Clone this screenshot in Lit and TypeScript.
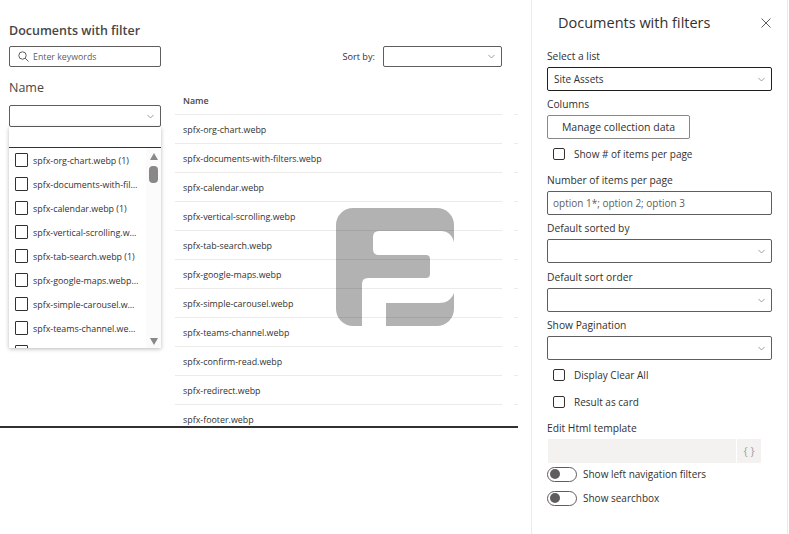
import { LitElement, html, css } from "lit";
import { customElement, property } from "lit/decorators.js";

const FILES = [
  "spfx-org-chart.webp",
  "spfx-documents-with-filters.webp",
  "spfx-calendar.webp",
  "spfx-vertical-scrolling.webp",
  "spfx-tab-search.webp",
  "spfx-google-maps.webp",
  "spfx-simple-carousel.webp",
  "spfx-teams-channel.webp",
  "spfx-confirm-read.webp",
  "spfx-redirect.webp",
  "spfx-footer.webp",
];

const chevron = html`<svg width="7" height="5" viewBox="0 0 7 5" fill="none" stroke="currentColor" stroke-width="0.8">
  <path d="M.3.8 3.5 4 6.7.8" />
</svg>`;

@customElement("fake-select")
export class FakeSelect extends LitElement {
  static styles = css`
    :host {
      display: block;
    }
    .box {
      box-sizing: border-box;
      display: flex;
      align-items: center;
      justify-content: space-between;
      height: 100%;
      padding: 0 6px;
      border: 1px solid #605e5c;
      border-radius: 2px;
      background: #fff;
      color: #323130;
      font-size: 10px;
    }
    .box.strong {
      border-color: #201f1e;
    }
    .chev {
      display: flex;
      color: #8a8886;
    }
  `;

  @property({ type: String }) value = "";
  @property({ type: Boolean }) strong = false;

  protected render() {
    return html`<div class="box ${this.strong ? "strong" : ""}">
      <span>${this.value}</span><span class="chev">${chevron}</span>
    </div>`;
  }
}

@customElement("fake-check")
export class FakeCheck extends LitElement {
  static styles = css`
    :host {
      display: flex;
      align-items: center;
      gap: 9px;
      margin-left: 6px;
      color: #323130;
      font-size: 10px;
    }
    i {
      display: block;
      box-sizing: border-box;
      width: 12px;
      height: 12px;
      border: 1px solid #323130;
      border-radius: 2px;
    }
  `;

  @property({ type: String }) label = "";

  protected render() {
    return html`<i></i><span>${this.label}</span>`;
  }
}

@customElement("fake-toggle")
export class FakeToggle extends LitElement {
  static styles = css`
    :host {
      display: flex;
      align-items: center;
      gap: 6px;
      color: #323130;
      font-size: 10px;
    }
    .track {
      box-sizing: border-box;
      display: flex;
      align-items: center;
      width: 30px;
      height: 15px;
      padding-left: 2px;
      border: 1px solid #605e5c;
      border-radius: 8px;
    }
    .dot {
      width: 10px;
      height: 10px;
      border-radius: 50%;
      background: #605e5c;
    }
  `;

  @property({ type: String }) label = "";

  protected render() {
    return html`<div class="track"><div class="dot"></div></div>
      <span>${this.label}</span>`;
  }
}

@customElement("app-root")
export class AppRoot extends LitElement {
  static styles = css`
    :host {
      display: flex;
      width: 789px;
      height: 534px;
      overflow: hidden;
      position: relative;
      background: #fff;
      color: #323130;
      font-family: "Open Sans", "Noto Sans", sans-serif;
      font-size: 10.25px;
      line-height: 14px;
    }
    .page {
      box-sizing: border-box;
      position: relative;
      flex: none;
      width: 518px;
      height: 428px;
      padding: 23px 16px 0 9px;
      border-bottom: 2px solid #323130;
      overflow: hidden;
    }
    .title {
      height: 16px;
      font-size: 12.5px;
      line-height: 16px;
      font-weight: 600;
      color: #484644;
    }
    .toolbar {
      display: flex;
      justify-content: space-between;
      margin-top: 7px;
      height: 21px;
    }
    .search {
      box-sizing: border-box;
      display: flex;
      align-items: center;
      gap: 4px;
      width: 152px;
      padding-left: 8px;
      border: 1px solid #605e5c;
      border-radius: 2px;
      font-size: 8.8px;
      color: #605e5c;
    }
    .search svg {
      color: #605e5c;
    }
    .sort {
      display: flex;
      align-items: center;
      gap: 8px;
      font-size: 9.2px;
    }
    .sort fake-select {
      width: 119px;
      height: 21px;
    }
    .body {
      display: flex;
      gap: 14px;
      margin-top: 13px;
    }
    .filter {
      flex: none;
      width: 152px;
    }
    .filter-label {
      height: 17px;
      font-size: 12.5px;
      line-height: 16px;
      color: #484644;
    }
    .filter fake-select {
      margin-top: 8px;
      height: 22px;
    }
    .table {
      flex: none;
      width: 343px;
      margin-top: 7px;
      font-size: 8.9px;
    }
    .row {
      display: flex;
      gap: 12px;
      height: 29px;
    }
    .row.head {
      height: 28px;
      font-weight: 600;
      color: #484644;
    }
    .cell {
      box-sizing: border-box;
      display: flex;
      align-items: center;
      width: 327px;
      padding: 1px 0 0 8px;
      border-bottom: 1px solid #edebe9;
    }
    .row.head .cell {
      padding-top: 0;
    }
    .stub {
      width: 4px;
      border-bottom: 1px solid #edebe9;
    }
    .popup {
      position: absolute;
      left: 9px;
      top: 127px;
      display: flex;
      flex-direction: column;
      width: 152px;
      height: 221px;
      overflow: hidden;
      background: #fff;
      box-shadow: 0 1px 4px rgba(0, 0, 0, 0.28);
    }
    .popup-input {
      flex: none;
      height: 20px;
      border-bottom: 1px solid #323130;
    }
    .popup-body {
      display: flex;
      flex: 1;
      min-height: 0;
    }
    .list {
      flex: none;
      box-sizing: border-box;
      width: 137px;
      padding: 0 7px 0 6px;
      overflow: hidden;
    }
    .item {
      display: flex;
      align-items: center;
      gap: 5px;
      height: 24px;
      font-size: 8.9px;
    }
    .item i {
      flex: none;
      box-sizing: border-box;
      width: 13px;
      height: 14px;
      border: 1px solid #323130;
      border-radius: 1px;
    }
    .item span {
      min-width: 0;
      padding-top: 1px;
      overflow: hidden;
      white-space: nowrap;
      text-overflow: ellipsis;
    }
    .scroll {
      display: flex;
      flex: 1;
      flex-direction: column;
      align-items: center;
      padding: 5px 0 3px;
      background: #fbfbfb;
    }
    .up,
    .down {
      width: 0;
      height: 0;
      border-left: 4.5px solid transparent;
      border-right: 4.5px solid transparent;
    }
    .up {
      border-bottom: 7px solid #8a8886;
    }
    .down {
      margin-top: auto;
      border-top: 7px solid #8a8886;
    }
    .thumb {
      width: 9px;
      height: 17px;
      margin-top: 6px;
      border-radius: 4px;
      background: #8a8886;
    }
    .logo {
      position: absolute;
      left: 336px;
      top: 208px;
      width: 118px;
      height: 118px;
      pointer-events: none;
    }
    .panel {
      box-sizing: border-box;
      position: absolute;
      left: 531px;
      top: 0;
      display: flex;
      flex-direction: column;
      width: 257px;
      height: 534px;
      padding: 0 15px;
      border-left: 1px solid #edebe9;
      border-right: 1px solid #edebe9;
      background: #fff;
    }
    .panel-head {
      display: flex;
      align-items: center;
      justify-content: space-between;
      height: 46px;
      padding-left: 11px;
    }
    .panel-title {
      font-size: 14.5px;
      font-weight: 500;
      color: #323130;
      line-height: 20px;
    }
    .close {
      display: flex;
      margin-right: 1px;
      color: #605e5c;
    }
    .panel label {
      display: block;
      height: 14px;
      font-weight: 500;
    }
    .control {
      height: 24px;
      margin-top: 4px;
    }
    .first {
      margin-top: 3px;
    }
    .gap-s {
      margin-top: 6px;
    }
    .gap-m {
      margin-top: 7px;
    }
    .gap-l {
      margin-top: 11px;
    }
    .gap-t {
      margin-top: 3px;
    }
    .gap-u {
      margin-top: 8px;
    }
    .line {
      height: 16px;
    }
    .button {
      box-sizing: border-box;
      display: flex;
      align-items: center;
      justify-content: center;
      width: 143px;
      height: 24px;
      margin-top: 4px;
      border: 1px solid #8a8886;
      border-radius: 2px;
      font-size: 10.5px;
      font-weight: 500;
    }
    .input {
      box-sizing: border-box;
      display: flex;
      align-items: center;
      height: 24px;
      margin-top: 4px;
      padding-left: 5px;
      border: 1px solid #605e5c;
      border-radius: 2px;
      color: #605e5c;
      font-size: 10px;
    }
    .template {
      display: flex;
      gap: 1px;
      height: 24px;
      margin: 4px 11px 0 1px;
    }
    .template div {
      background: #f3f2f1;
    }
    .template .code {
      flex: 1;
    }
    .template .brace {
      display: flex;
      align-items: center;
      justify-content: center;
      width: 24px;
      color: #a19f9d;
      font-size: 11px;
    }
  `;

  protected render() {
    const shown = FILES.slice(0, 9);
    return html`
      <div class="page">
        <div class="title">Documents with filter</div>
        <div class="toolbar">
          <div class="search">
            <svg width="11" height="11" viewBox="0 0 11 11" fill="none" stroke="currentColor" stroke-width="1">
              <circle cx="4.5" cy="4.5" r="3.7" />
              <path d="M7.2 7.2 10.5 10.5" />
            </svg>
            <span>Enter keywords</span>
          </div>
          <div class="sort">
            <span>Sort by:</span>
            <fake-select></fake-select>
          </div>
        </div>
        <div class="body">
          <div class="filter">
            <div class="filter-label">Name</div>
            <fake-select></fake-select>
          </div>
          <div class="table">
            <div class="row head">
              <div class="cell">Name</div>
              <div class="stub"></div>
            </div>
            ${FILES.map(
              (f) => html`<div class="row">
                <div class="cell">${f}</div>
                <div class="stub"></div>
              </div>`,
            )}
          </div>
        </div>
        <div class="popup">
          <div class="popup-input"></div>
          <div class="popup-body">
            <div class="list">
              ${shown.map((f, i) => {
                const count = i < 8 ? " (1)" : "";
                return html`<div class="item"><i></i><span>${f}${count}</span></div>`;
              })}
            </div>
            <div class="scroll">
              <div class="up"></div>
              <div class="thumb"></div>
              <div class="down"></div>
            </div>
          </div>
        </div>
      </div>
      <svg class="logo" viewBox="0 0 118 118" fill="rgba(0,0,0,0.3)">
        <path d="M17 0H101A17 17 0 0 1 118 17V34C116 27 112 23 105 23H43Q37 23 37 29V41Q37 47 43 47H90Q94 47 94 51V66Q94 70 90 70H32Q26 70 26 76V118H17A17 17 0 0 1 0 101V17A17 17 0 0 1 17 0Z" />
        <path d="M50 118V95H103C110 95 115 92 118 85V101A17 17 0 0 1 101 118Z" />
      </svg>
      <div class="panel">
        <div class="panel-head">
          <div class="panel-title">Documents with filters</div>
          <span class="close">
            <svg width="10" height="10" viewBox="0 0 10 10" fill="none" stroke="currentColor" stroke-width="1">
              <path d="M.5.5 9.5 9.5M9.5.5.5 9.5" />
            </svg>
          </span>
        </div>
        <label class="first">Select a list</label>
        <fake-select class="control" strong value="Site Assets"></fake-select>
        <label class="gap-s">Columns</label>
        <div class="button">Manage collection data</div>
        <fake-check class="line gap-m" label="Show # of items per page"></fake-check>
        <label class="gap-l">Number of items per page</label>
        <div class="input">option 1*; option 2; option 3</div>
        <label class="gap-s">Default sorted by</label>
        <fake-select class="control"></fake-select>
        <label class="gap-m">Default sort order</label>
        <fake-select class="control"></fake-select>
        <label class="gap-s">Show Pagination</label>
        <fake-select class="control"></fake-select>
        <fake-check class="line gap-m" label="Display Clear All"></fake-check>
        <fake-check class="line gap-l" label="Result as card"></fake-check>
        <label class="gap-l">Edit Html template</label>
        <div class="template">
          <div class="code"></div>
          <div class="brace">{ }</div>
        </div>
        <fake-toggle class="line gap-t" label="Show left navigation filters"></fake-toggle>
        <fake-toggle class="line gap-u" label="Show searchbox"></fake-toggle>
      </div>
    `;
  }
}
